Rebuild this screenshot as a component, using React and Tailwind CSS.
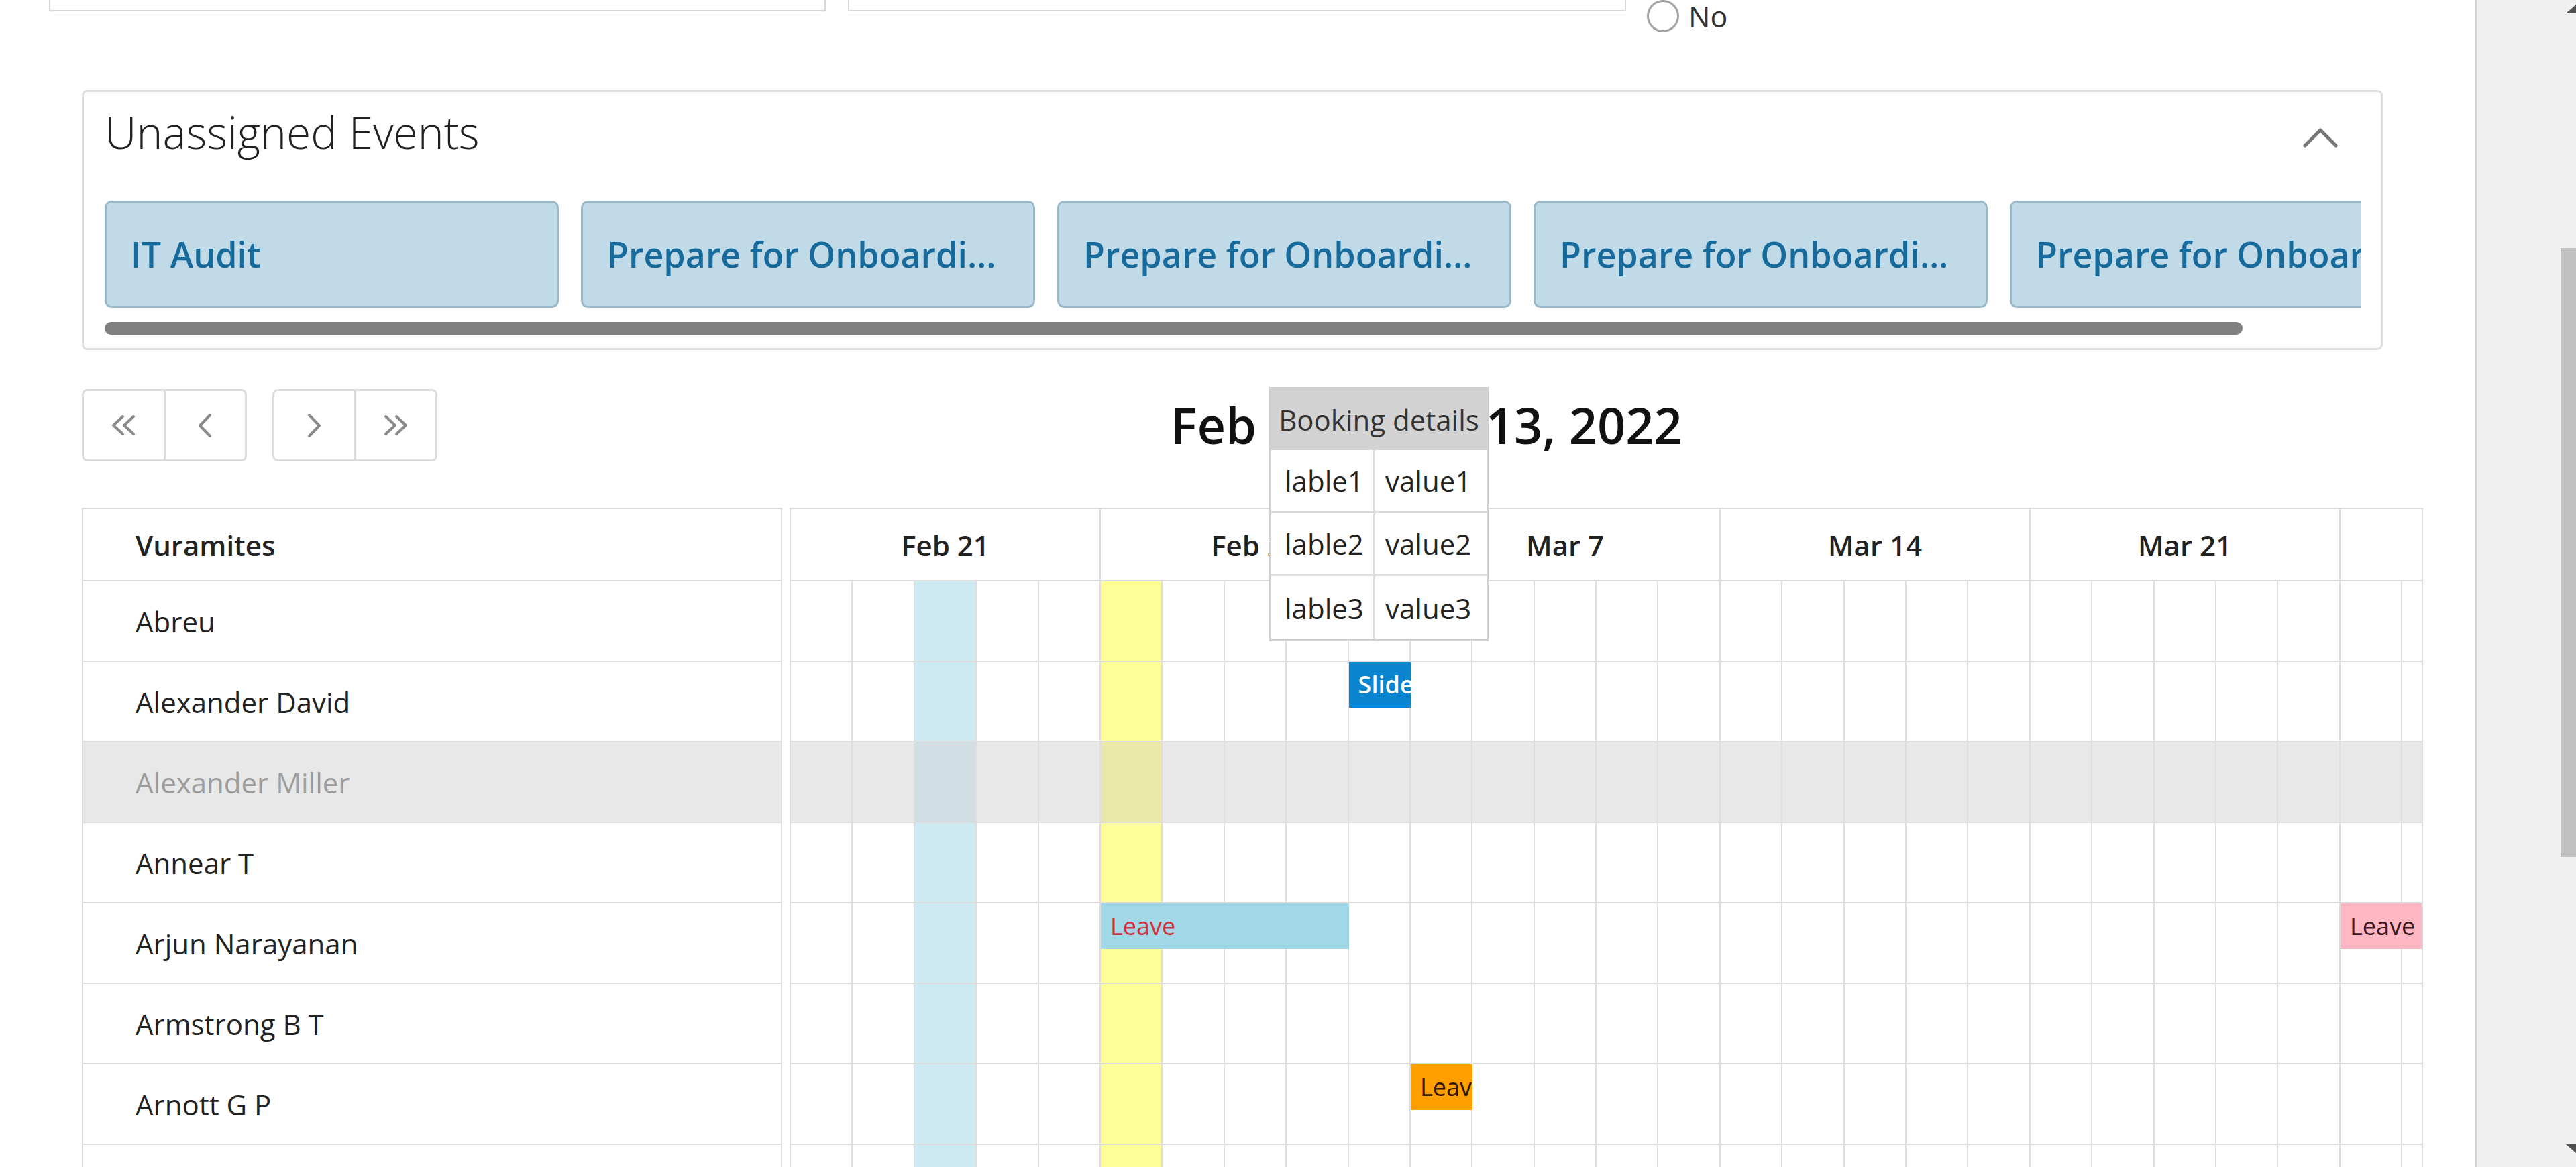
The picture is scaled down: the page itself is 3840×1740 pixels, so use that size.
import React from "react";

const DAY = 92.4;

const weeks = ["Feb 21", "Feb 28", "Mar 7", "Mar 14", "Mar 21", "Mar 28"];

const people = [
  "Abreu",
  "Alexander David",
  "Alexander Miller",
  "Annear T",
  "Arjun Narayanan",
  "Armstrong B T",
  "Arnott G P",
  "Ashok Kumar",
];

const SELECTED = 2;

const events = {
  1: [{ day: 9, span: 1, label: "Slide Deck Review", cls: "bg-[#0a84cf] text-white font-semibold" }],
  4: [
    { day: 5, span: 4, label: "Leave", cls: "bg-[#a0d8e7] text-[#d3303c]" },
    { day: 25, span: 2, label: "Leave", cls: "bg-[#ffb7c3] text-[#3a1620]" },
  ],
  6: [{ day: 10, span: 1, label: "Leave", cls: "bg-[#ff9f00] text-[#2b1800]" }],
};

const unassigned = [
  "IT Audit",
  "Prepare for Onboarding Session",
  "Prepare for Onboarding Session",
  "Prepare for Onboarding Session",
  "Prepare for Onboarding Session",
];

const details = [
  ["lable1", "value1"],
  ["lable2", "value2"],
  ["lable3", "value3"],
];

function dayClass(i, selected) {
  if (i === 2) return selected ? "bg-[#d1dee3]" : "bg-[#cdeaf3]";
  if (i === 5) return selected ? "bg-[#e9e7a9]" : "bg-[#ffff99]";
  return "";
}

const DoubleLeft = () => (
  <svg width="38" height="32" viewBox="0 0 38 32" fill="none" stroke="#8a8a8a" strokeWidth="4" strokeLinecap="round" strokeLinejoin="round">
    <path d="M18 3 L4 16 L18 29 M34 3 L20 16 L34 29" />
  </svg>
);

const DoubleRight = () => (
  <svg width="38" height="32" viewBox="0 0 38 32" fill="none" stroke="#8a8a8a" strokeWidth="4" strokeLinecap="round" strokeLinejoin="round">
    <path d="M4 3 L18 16 L4 29 M20 3 L34 16 L20 29" />
  </svg>
);

const Left = () => (
  <svg width="23" height="37" viewBox="0 0 23 37" fill="none" stroke="#8a8a8a" strokeWidth="4" strokeLinecap="round" strokeLinejoin="round">
    <path d="M19 3 L4 18.5 L19 34" />
  </svg>
);

const Right = () => (
  <svg width="23" height="37" viewBox="0 0 23 37" fill="none" stroke="#8a8a8a" strokeWidth="4" strokeLinecap="round" strokeLinejoin="round">
    <path d="M4 3 L19 18.5 L4 34" />
  </svg>
);

function NavGroup({ first, second, className = "" }) {
  return (
    <div className={`flex h-[108px] w-[246px] rounded-[8px] border-[3px] border-[#dcdcdc] ${className}`}>
      <button className="flex flex-1 items-center justify-center border-r-[3px] border-[#dcdcdc]">{first}</button>
      <button className="flex flex-1 items-center justify-center">{second}</button>
    </div>
  );
}

export default function App() {
  return (
    <div className="flex h-[1740px] w-[3840px] overflow-hidden bg-white font-['Open_Sans','Liberation_Sans',sans-serif] text-[#222]">
      <div className="relative min-w-0 flex-1 overflow-hidden">
        {/* top form remnants */}
        <div className="flex h-[51px] items-start">
          <div className="ml-[73px] h-[17px] w-[1158px] border-x-2 border-b-2 border-[#d6d6d6]" />
          <div className="ml-[33px] h-[17px] w-[1160px] border-x-2 border-b-2 border-[#d6d6d6]" />
          <label className="ml-[31px] flex items-center gap-[14px]">
            <span className="h-[48px] w-[48px] rounded-full border-[3px] border-[#a3a3a3]" />
            <span className="text-[43px] leading-none text-[#333]">No</span>
          </label>
        </div>

        {/* unassigned events */}
        <div className="ml-[122px] mt-[83px] w-[3430px] rounded-[8px] border-[3px] border-[#dedede] pb-[20px] pl-[31px] pr-[29px]">
          <div className="flex h-[118px] items-center justify-between">
            <h2 className="text-[66px] font-light leading-none text-[#222]">Unassigned Events</h2>
            <svg className="mr-[35px] mt-[18px]" width="52" height="30" viewBox="0 0 52 30" fill="none" stroke="#777" strokeWidth="5" strokeLinecap="round" strokeLinejoin="round">
              <path d="M3 27 L26 4 L49 27" />
            </svg>
          </div>
          <div className="mt-[44px] flex h-[160px] gap-[33px] overflow-hidden">
            {unassigned.map((t, i) => (
              <div
                key={i}
                className="flex h-[160px] w-[677px] shrink-0 items-center rounded-[10px] border-[3px] border-[#9bb9c9] bg-[#c1dae7] pl-[36px] pr-[34px]"
              >
                <span className="block truncate text-[52px] font-semibold text-[#176b9c]">{t}</span>
              </div>
            ))}
          </div>
          <div className="mt-[21px] h-[19px] w-[3187px] rounded-full bg-[#808080]" />
        </div>

        {/* toolbar */}
        <div className="ml-[122px] mt-[58px] flex h-[108px] items-center">
          <NavGroup first={<DoubleLeft />} second={<Left />} />
          <NavGroup first={<Right />} second={<DoubleRight />} className="ml-[38px]" />
          <h1 className="ml-[1093px] whitespace-nowrap text-[74px] font-semibold leading-none text-[#111]">
            Feb 21 – Mar 13, 2022
          </h1>
        </div>

        {/* scheduler */}
        <div className="ml-[122px] mt-[69px] flex items-start">
          <div className="w-[1044px] shrink-0 border-x-2 border-t-2 border-[#dcdcdc]">
            <div className="flex h-[108px] items-center border-b-2 border-[#dcdcdc] pl-[78px] text-[42px] font-semibold">
              Vuramites
            </div>
            {people.map((p, r) => (
              <div
                key={p}
                className={`flex h-[120px] items-center border-b-2 border-[#dcdcdc] pl-[78px] text-[42px] ${
                  r === SELECTED ? "bg-[#e8e8e8] text-[#9c9c9c]" : ""
                }`}
              >
                {p}
              </div>
            ))}
          </div>

          <div className="ml-[11px] w-[2435px] shrink-0 overflow-hidden border-x-2 border-t-2 border-[#dcdcdc]">
            <div className="flex h-[108px] border-b-2 border-[#dcdcdc]">
              {weeks.map((w) => (
                <div
                  key={w}
                  className="flex w-[462px] shrink-0 items-center justify-center border-r-2 border-[#dcdcdc] text-[42px] font-semibold"
                >
                  {w}
                </div>
              ))}
            </div>
            {people.map((p, r) => (
              <div key={p} className="relative flex h-[120px] border-b-2 border-[#dcdcdc]">
                {Array.from({ length: 27 }, (_, i) => (
                  <div
                    key={i}
                    className={`w-[92.4px] shrink-0 border-r-2 border-[#dedede] ${
                      r === SELECTED && i !== 2 && i !== 5 ? "bg-[#e8e8e8]" : ""
                    } ${dayClass(i, r === SELECTED)}`}
                  />
                ))}
                {(events[r] || []).map((e, k) => (
                  <div
                    key={k}
                    className={`absolute top-0 flex h-[68px] items-center overflow-hidden whitespace-nowrap pl-[14px] text-[36px] ${e.cls}`}
                    style={{ left: e.day * DAY, width: e.span * DAY }}
                  >
                    {e.label}
                  </div>
                ))}
              </div>
            ))}
          </div>
        </div>

        {/* booking tooltip */}
        <div className="absolute left-[1892px] top-[577px] w-[327px] border-[3px] border-[#cfcfcf] bg-white">
          <div className="flex h-[91px] items-center justify-center bg-[#d3d3d3] text-[42px] text-[#333]">
            Booking details
          </div>
          {details.map(([l, v], i) => (
            <div
              key={l}
              className={`grid h-[94px] grid-cols-[155px_1fr] text-[42px] ${i < 2 ? "border-b-[3px] border-[#dcdcdc]" : ""}`}
            >
              <div className="flex items-center border-r-[3px] border-[#dcdcdc] pl-[20px]">{l}</div>
              <div className="flex items-center pl-[15px]">{v}</div>
            </div>
          ))}
        </div>
      </div>

      {/* page scrollbar */}
      <div className="flex w-[150px] shrink-0 flex-col items-end border-l-[3px] border-[#d0d0d0] bg-[#f0f0f0]">
        <svg className="mr-[-15px] mt-[7px]" width="30" height="13" viewBox="0 0 30 13">
          <path d="M15 0 L30 13 L0 13 Z" fill="#505050" />
        </svg>
        <div className="mt-[350px] h-[908px] w-[23px] bg-[#c1c1c1]" />
        <svg className="mb-[21px] mr-[-15px] mt-auto" width="30" height="13" viewBox="0 0 30 13">
          <path d="M0 0 L30 0 L15 13 Z" fill="#505050" />
        </svg>
      </div>
    </div>
  );
}
